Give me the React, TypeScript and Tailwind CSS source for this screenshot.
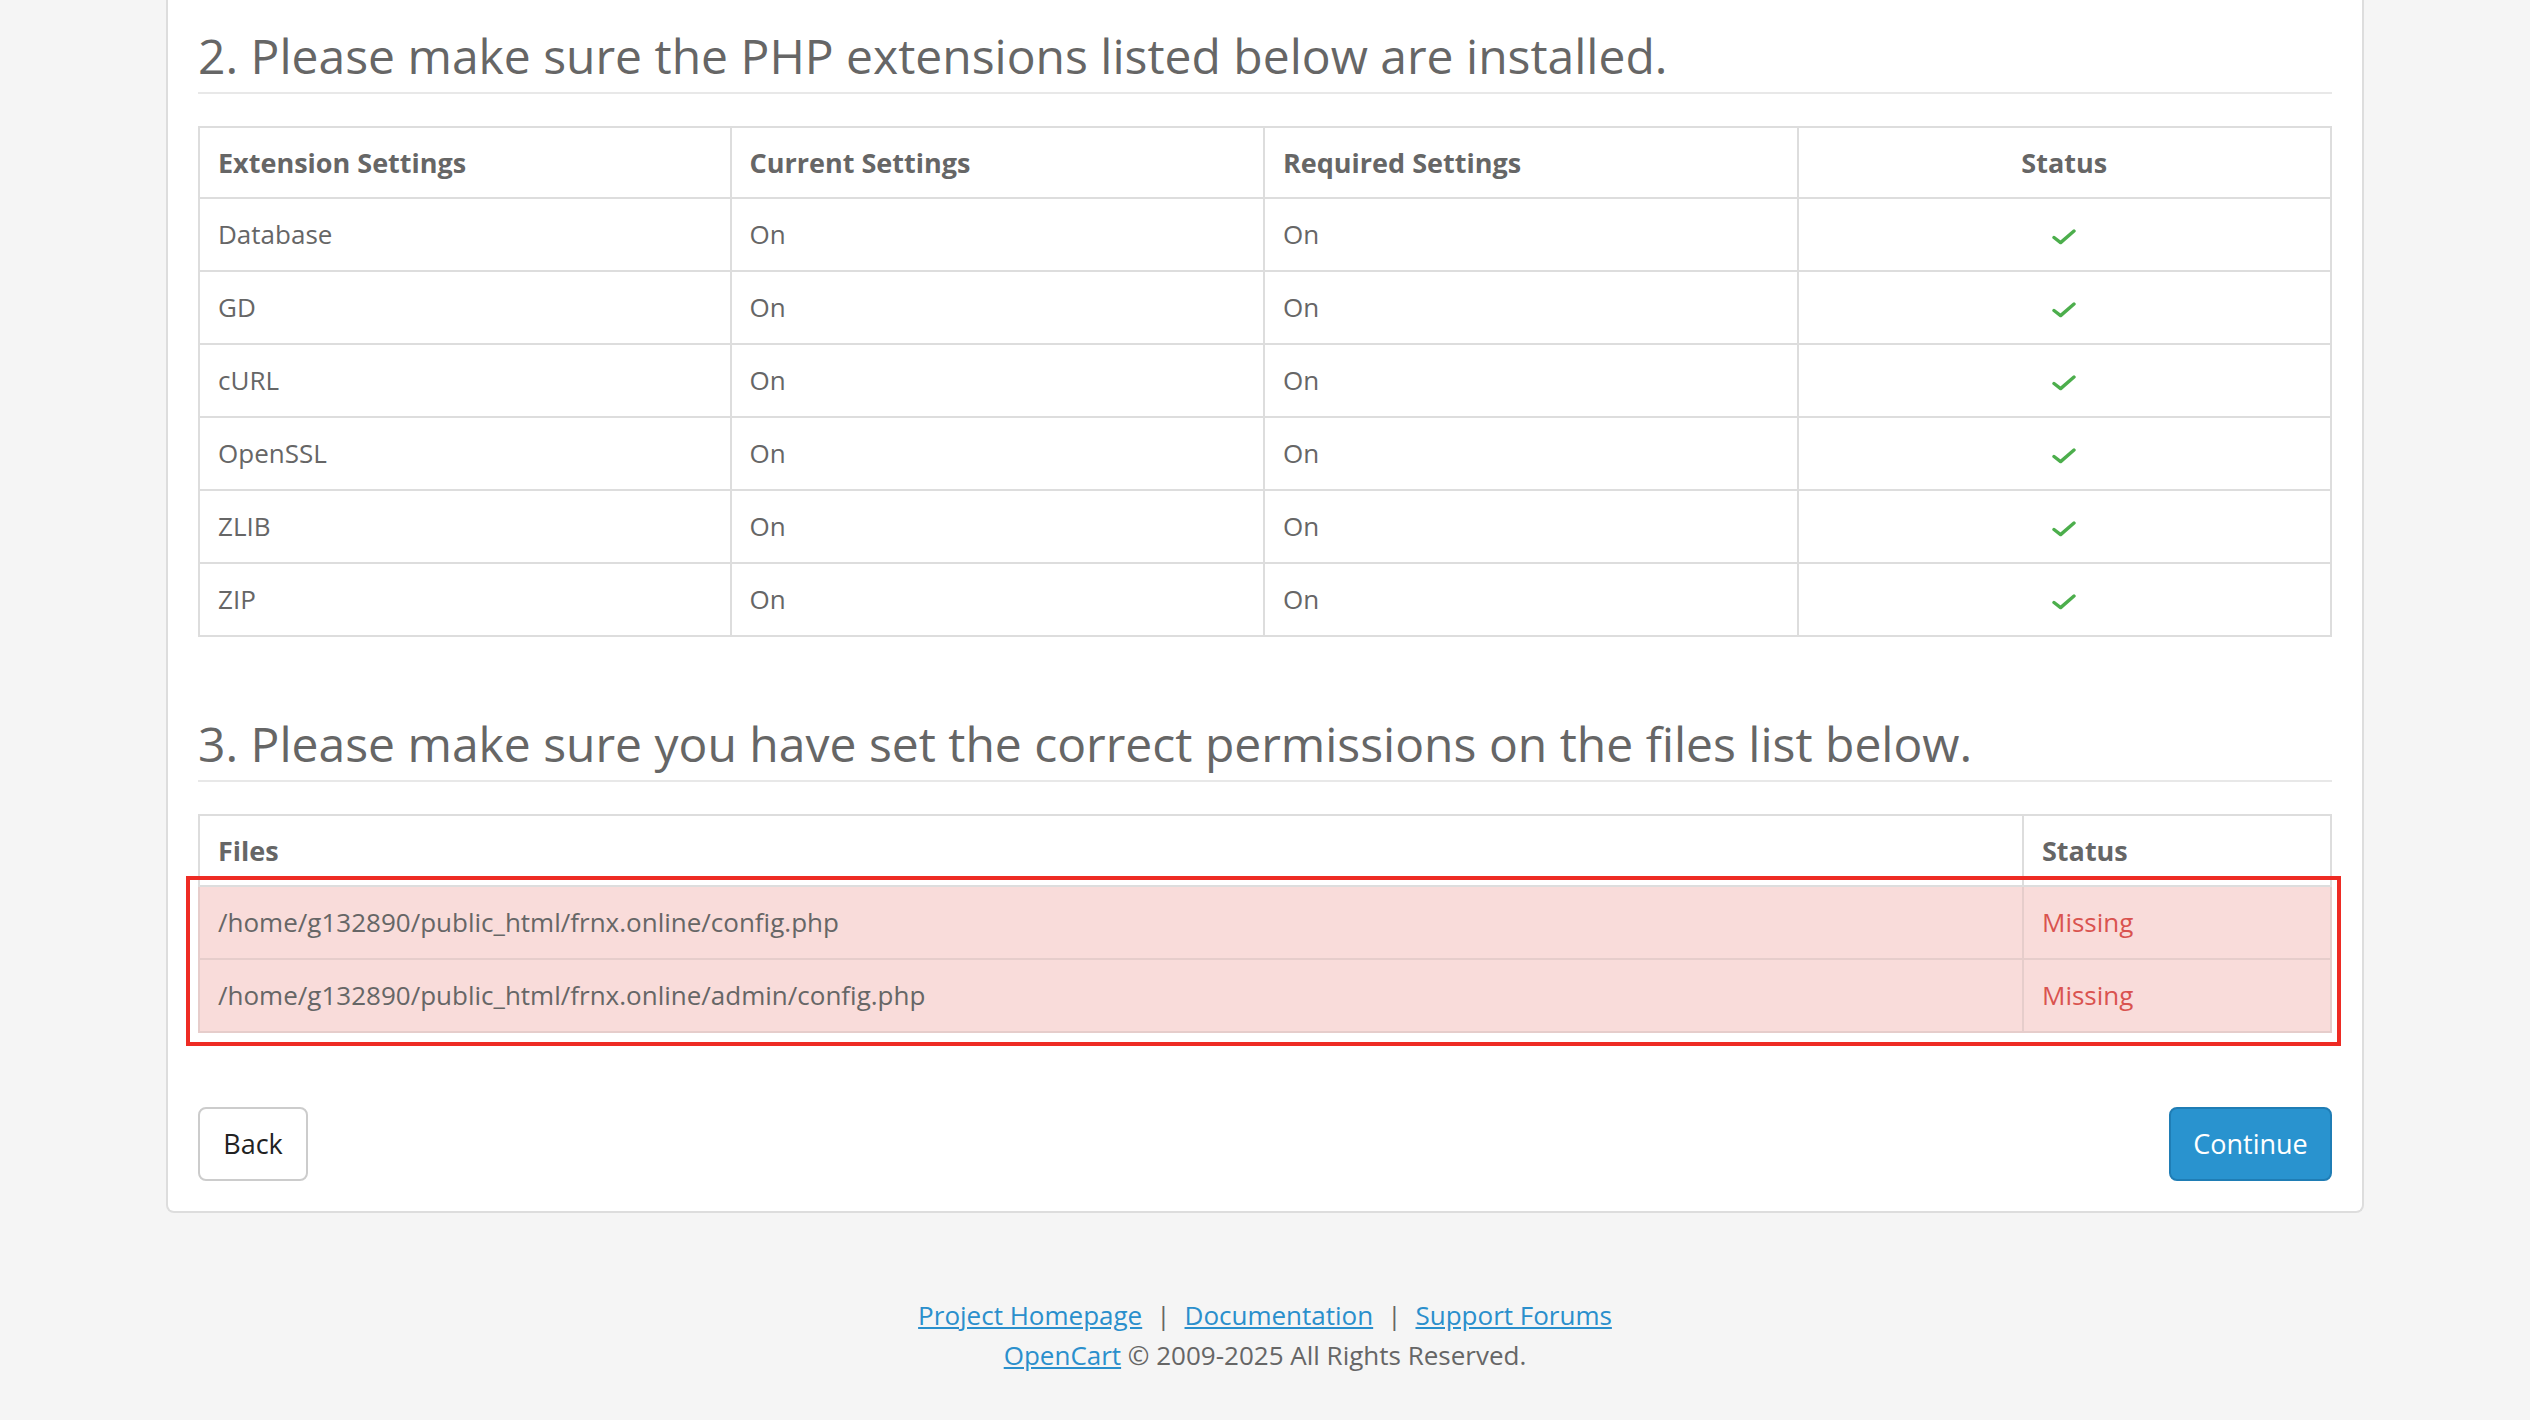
import React from 'react';

const font = { fontFamily: '"Open Sans", "Liberation Sans", sans-serif' };

const extensions = ['Database', 'GD', 'cURL', 'OpenSSL', 'ZLIB', 'ZIP'];

const files = [
  '/home/g132890/public_html/frnx.online/config.php',
  '/home/g132890/public_html/frnx.online/admin/config.php',
];

const Check = () => (
  <svg width="24" height="16" viewBox="0 0 24 16" className="inline-block align-middle">
    <polyline points="2,8.5 8.6,13.6 22,2" fill="none" stroke="#4cae4c" strokeWidth="3.4" strokeLinecap="round" strokeLinejoin="round" />
  </svg>
);

const App: React.FC = () => {
  return (
    <div className="min-h-screen bg-[#f5f5f5] text-[26px] text-[#666]" style={font}>
      <div className="mx-auto w-[2198px] bg-white border-2 border-t-0 border-[#ddd] rounded-b-[8px] px-[30px] pt-[27px] pb-[30px]">
        <h3 className="text-[48px] leading-[57px] font-normal text-[#666] pb-[8px] border-b-2 border-[#e8e8e8]">
          2. Please make sure the PHP extensions listed below are installed.
        </h3>

        <table className="mt-[32px] w-full table-fixed border-separate border-spacing-0">
          <thead>
            <tr className="font-bold text-[27px]">
              <td className="border-2 border-[#ddd] px-[18px] py-[15px] leading-[39px]">Extension Settings</td>
              <td className="border-2 border-l-0 border-[#ddd] px-[18px] py-[15px] leading-[39px]">Current Settings</td>
              <td className="border-2 border-l-0 border-[#ddd] px-[18px] py-[15px] leading-[39px]">Required Settings</td>
              <td className="border-2 border-l-0 border-[#ddd] px-[18px] py-[15px] leading-[39px] text-center">Status</td>
            </tr>
          </thead>
          <tbody>
            {extensions.map((name) => (
              <tr key={name}>
                <td className="border-2 border-t-0 border-[#ddd] px-[18px] py-[15px] leading-[41px]">{name}</td>
                <td className="border-b-2 border-r-2 border-[#ddd] px-[18px] py-[15px] leading-[41px]">On</td>
                <td className="border-b-2 border-r-2 border-[#ddd] px-[18px] py-[15px] leading-[41px]">On</td>
                <td className="border-b-2 border-r-2 border-[#ddd] px-[18px] py-[15px] leading-[41px] text-center">
                  <Check />
                </td>
              </tr>
            ))}
          </tbody>
        </table>

        <h3 className="mt-[78px] text-[48px] leading-[57px] font-normal text-[#666] pb-[8px] border-b-2 border-[#e8e8e8]">
          3. Please make sure you have set the correct permissions on the files list below.
        </h3>

        <div className="relative mt-[32px]">
          <table className="w-full table-fixed border-separate border-spacing-0">
            <thead>
              <tr className="font-bold text-[27px]">
                <td className="border-2 border-[#ddd] px-[18px] py-[15px] leading-[39px]">Files</td>
                <td className="w-[308px] border-2 border-l-0 border-[#ddd] px-[18px] py-[15px] leading-[39px]">Status</td>
              </tr>
            </thead>
            <tbody>
              {files.map((f) => (
                <tr key={f} className="bg-[#f9dcda]">
                  <td className="border-2 border-t-0 border-[#e6cdcb] px-[18px] py-[15px] leading-[41px]">{f}</td>
                  <td className="border-b-2 border-r-2 border-[#e6cdcb] px-[18px] py-[15px] leading-[41px] text-[#d9534f]">Missing</td>
                </tr>
              ))}
            </tbody>
          </table>
          <div className="absolute left-[-12px] top-[62px] w-[2155px] h-[170px] border-[4px] border-[#ee2b24] pointer-events-none" />
        </div>

        <div className="mt-[74px] flex items-center justify-between">
          <button className="w-[110px] h-[74px] bg-white border-2 border-[#ccc] rounded-[8px] text-[#222] text-[27px]">Back</button>
          <button className="w-[163px] h-[74px] bg-[#2993cf] border-2 border-[#1f7db5] rounded-[8px] text-white text-[27px]">Continue</button>
        </div>
      </div>

      <footer className="mt-[82px] pb-[40px] text-center leading-[40px]">
        <div>
          <a href="#" className="text-[#2a8fcc] underline">Project Homepage</a>
          <span className="mx-[14px]">|</span>
          <a href="#" className="text-[#2a8fcc] underline">Documentation</a>
          <span className="mx-[14px]">|</span>
          <a href="#" className="text-[#2a8fcc] underline">Support Forums</a>
        </div>
        <div>
          <a href="#" className="text-[#2a8fcc] underline">OpenCart</a> © 2009-2025 All Rights Reserved.
        </div>
      </footer>
    </div>
  );
};

export default App;
